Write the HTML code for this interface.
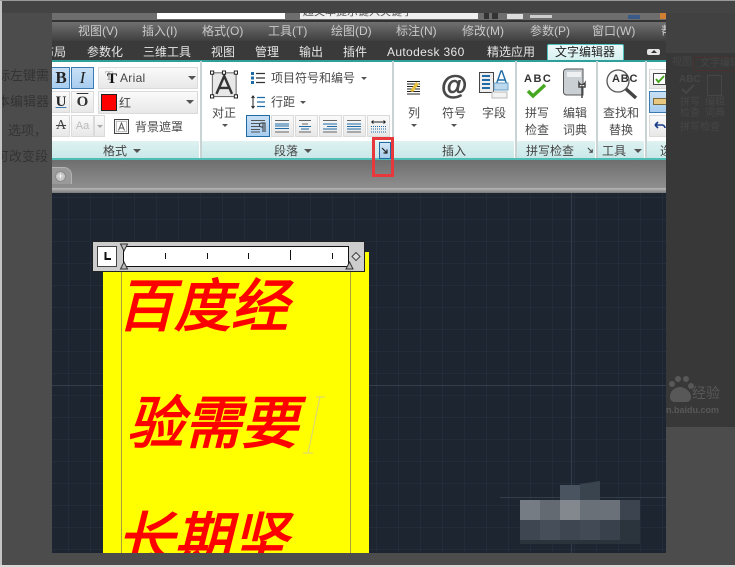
<!DOCTYPE html>
<html lang="zh"><head><meta charset="utf-8"><style>
html,body{margin:0;padding:0}
body{width:735px;height:567px;overflow:hidden;position:relative;background:#4c4c4c;font-family:"Liberation Sans","Noto Sans CJK SC",sans-serif}
div,span{position:absolute;white-space:nowrap;box-sizing:border-box}
svg{position:absolute;overflow:visible}
.m{top:23px;font-size:12px;line-height:16px;color:#c9c9c9}
.t{top:44px;height:16px;font-size:12px;line-height:16px;color:#e6e6e6}
.l{font-size:12px;line-height:16px;color:#4a4a4a}
.p{font-size:12px;line-height:16px;color:#444;top:143px}
.bd{top:141px;height:17px;background:linear-gradient(#dff2f2,#c9e8e8)}
.btn{background:linear-gradient(#fafafa,#e8e8e8);border:1px solid #dadada}
.on{background:linear-gradient(#c9e0f5,#a8cdf0);border:1px solid #3a7ab0}
.sep{top:61px;width:2px;height:97px;background:#c9d3d3}
.red{font-family:"Noto Sans CJK SC",sans-serif;color:#f00;font-weight:400;font-style:italic;font-size:57px;line-height:70px;-webkit-text-stroke:1.6px #f00}
.tr{width:0;height:0;border-left:3px solid transparent;border-right:3px solid transparent;border-top:3px solid #555}
.bg{color:#464646;font-size:10px;line-height:12px}
.lt{font-size:13px;line-height:16px;color:#333}
</style></head><body>
<!-- backdrop -->
<div class="lt" style="left:-3px;top:68px">标左键需</div>
<div class="lt" style="left:-3px;top:94px">本编辑器</div>
<div class="lt" style="left:8px;top:123px">选项，</div>
<div class="lt" style="left:-4px;top:149px">可改变段</div>
<div style="left:0;top:0;width:2px;height:567px;background:#c4c4c4"></div>
<div style="left:0;top:0;width:735px;height:1px;background:#9a9a9a"></div>
<div style="left:2px;top:1px;width:733px;height:12px;background:#444"></div>
<div style="left:0;top:565px;width:735px;height:2px;background:#d8d8d8"></div>
<div style="left:666px;top:13px;width:69px;height:40px;background:#414141"></div>
<div style="left:666px;top:53px;width:69px;height:374px;background:#383838"></div>
<!-- ghost ribbon on right -->
<div class="bg" style="left:672px;top:57px">视图</div>
<div style="left:693px;top:57px;width:42px;height:14px;border:1px solid #4a3030;border-right:0;border-radius:3px 0 0 3px"></div>
<div class="bg" style="left:700px;top:58px">文字编辑器</div>
<div class="bg" style="left:679px;top:74px;font-weight:700">ABC</div>
<svg style="left:681px;top:84px" width="14" height="10" viewBox="0 0 14 10"><path d="M1 5 5 9 13 1" fill="none" stroke="#464646" stroke-width="2"/></svg>
<div style="left:707px;top:75px;width:15px;height:21px;border:1px solid #464646"></div>
<div class="bg" style="left:680px;top:97px">拼写</div><div class="bg" style="left:705px;top:97px">编辑</div>
<div class="bg" style="left:680px;top:108px">检查</div><div class="bg" style="left:705px;top:108px">词典</div>
<div class="bg" style="left:680px;top:122px">拼写检查</div>
<!-- watermark -->
<svg style="left:666px;top:374px" width="60" height="40" viewBox="0 0 60 40"><g fill="#585858"><circle cx="6" cy="10" r="3"/><circle cx="12" cy="5" r="3"/><circle cx="20" cy="5" r="3"/><circle cx="25" cy="12" r="3"/><path d="M4 23c0-7 6-10 10-10s11 4 11 10c0 4-3 5-5 5H9c-3 0-5-2-5-5z"/></g></svg>
<div style="left:692px;top:385px;font-size:14px;line-height:16px;color:#585858">经验</div>
<div style="left:666px;top:404px;font-size:9px;line-height:12px;color:#585858;font-weight:700">n.baidu.com</div>

<!-- app -->
<div style="left:52px;top:13px;width:614px;height:7px;background:#6e6e6e"></div>
<div style="left:157px;top:13px;width:128px;height:6px;background:#fff"></div>
<div style="left:300px;top:13px;width:178px;height:6px;background:#f0f0f0;overflow:hidden"><span style="left:3px;top:-8px;font-size:11px;line-height:14px;color:#555">超文本提示键入关键字</span></div>
<div style="left:484px;top:13px;width:5px;height:6px;background:#333"></div>
<div style="left:492px;top:13px;width:6px;height:6px;background:#333"></div>
<div style="left:507px;top:14px;width:16px;height:5px;background:#ddd"></div>
<div style="left:530px;top:15px;width:22px;height:3px;background:#ccc"></div>
<div style="left:628px;top:15px;width:12px;height:4px;background:#3a5a8a"></div>
<div style="left:660px;top:13px;width:6px;height:6px;background:#d08030"></div>
<div style="left:52px;top:20px;width:614px;height:2px;background:#333"></div>
<div style="left:52px;top:22px;width:614px;height:19px;background:linear-gradient(#707070,#3f3f3f)"></div>
<div class="m" style="left:78px">视图(V)</div>
<div class="m" style="left:142px">插入(I)</div>
<div class="m" style="left:202px">格式(O)</div>
<div class="m" style="left:268px">工具(T)</div>
<div class="m" style="left:331px">绘图(D)</div>
<div class="m" style="left:396px">标注(N)</div>
<div class="m" style="left:462px">修改(M)</div>
<div class="m" style="left:530px">参数(P)</div>
<div class="m" style="left:592px">窗口(W)</div>
<div class="m" style="left:661px;width:5px;height:16px;overflow:hidden">帮</div>
<div style="left:52px;top:41px;width:614px;height:20px;background:#3a3a3a"></div>
<div class="t" style="left:52px;width:14px;overflow:hidden"><span style="left:-10px;top:0">布局</span></div>
<div class="t" style="left:87px">参数化</div>
<div class="t" style="left:143px">三维工具</div>
<div class="t" style="left:211px">视图</div>
<div class="t" style="left:255px">管理</div>
<div class="t" style="left:299px">输出</div>
<div class="t" style="left:343px">插件</div>
<div class="t" style="left:387px;letter-spacing:.35px">Autodesk 360</div>
<div class="t" style="left:487px">精选应用</div>
<div style="left:547px;top:44px;width:77px;height:18px;background:linear-gradient(#eefafa,#d3f0ef);border:1px solid #4fc0bb;border-bottom:0;border-radius:2px 2px 0 0"></div>
<div class="t" style="left:555px;color:#222">文字编辑器</div>
<div style="left:647px;top:49px;width:13px;height:6px;background:#e4e4e4;border-radius:2px"></div>
<div class="tr" style="left:651px;top:50px;border-top:0;border-bottom:3px solid #333"></div>

<!-- ribbon -->
<div style="left:52px;top:60px;width:614px;height:2px;background:#2f9f9a"></div>
<div style="left:52px;top:62px;width:614px;height:96px;background:#fff"></div>
<div class="bd" style="left:52px;width:147px"></div>
<div class="bd" style="left:202px;width:188px"></div>
<div class="bd" style="left:394px;width:120px"></div>
<div class="bd" style="left:517px;width:78px"></div>
<div class="bd" style="left:598px;width:46px"></div>
<div class="bd" style="left:647px;width:19px"></div>
<div class="sep" style="left:200px"></div>
<div class="sep" style="left:392px"></div>
<div class="sep" style="left:515px"></div>
<div class="sep" style="left:596px"></div>
<div class="sep" style="left:645px"></div>
<div style="left:52px;top:158px;width:614px;height:2px;background:#4fbcb6"></div>

<!-- format panel -->
<div class="on" style="left:52px;top:67px;width:18px;height:22px;border-left:0"></div>
<div style="left:52px;top:67px;width:18px;height:22px;font:700 17px/22px 'Liberation Serif',serif;color:#222;text-align:center">B</div>
<div class="on" style="left:71px;top:67px;width:23px;height:22px"></div>
<div style="left:71px;top:67px;width:23px;height:22px;font:italic 17px/22px 'Liberation Serif',serif;color:#222;text-align:center">I</div>
<div class="btn" style="left:52px;top:91px;width:18px;height:22px;border-left:0"></div>
<div style="left:52px;top:91px;width:18px;height:22px;font:700 15px/22px 'Liberation Serif',serif;color:#222;text-align:center;text-decoration:underline;text-decoration-color:#3a7ab0">U</div>
<div class="btn" style="left:71px;top:91px;width:23px;height:22px"></div>
<div style="left:71px;top:91px;width:23px;height:22px;font:700 15px/22px 'Liberation Serif',serif;color:#333;text-align:center;text-decoration:overline">O</div>
<div class="btn" style="left:52px;top:115px;width:18px;height:22px;border-left:0"></div>
<div style="left:52px;top:115px;width:18px;height:22px;font:14px/22px 'Liberation Serif',serif;color:#444;text-align:center;text-decoration:line-through">A</div>
<div class="btn" style="left:71px;top:115px;width:23px;height:22px"></div>
<div style="left:71px;top:115px;width:23px;height:22px;font:11px/22px 'Liberation Sans',sans-serif;color:#bbb;text-align:center">Aa</div>
<div class="btn" style="left:94px;top:115px;width:11px;height:22px"></div>
<div class="tr" style="left:97px;top:125px;border-top-color:#aaa"></div>
<div class="btn" style="left:98px;top:67px;width:100px;height:22px"></div>
<div style="left:105px;top:68px;font:13px/16px 'Liberation Serif',serif;color:#999">T</div>
<div style="left:107px;top:71px;font:700 15px/16px 'Liberation Serif',serif;color:#111">T</div>
<div style="left:120px;top:70px;font-size:12px;line-height:16px;color:#444;letter-spacing:.3px">Arial</div>
<div class="tr" style="left:188px;top:76px;border-left-width:4px;border-right-width:4px;border-top-width:4px"></div>
<div class="btn" style="left:98px;top:91px;width:100px;height:23px"></div>
<div style="left:101px;top:94px;width:16px;height:17px;background:#f00;border:1px solid #222"></div>
<div style="left:119px;top:95px;font-size:12px;line-height:16px;color:#444">红</div>
<div class="tr" style="left:186px;top:100px;border-left-width:4px;border-right-width:4px;border-top-width:4px"></div>
<svg style="left:114px;top:119px" width="16" height="16" viewBox="0 0 16 16"><rect x=".5" y=".5" width="14" height="14" fill="#f4f4f4" stroke="#444"/><rect x="2.5" y="2.5" width="10" height="10" fill="#fff" stroke="#888" stroke-dasharray="1 1"/><path d="M4.5 11.5 7.5 4l3 7.5M5.5 9h4" fill="none" stroke="#555"/></svg>
<div class="l" style="left:135px;top:119px">背景遮罩</div>
<div class="p" style="left:103px">格式</div>
<div class="tr" style="left:133px;top:149px;border-left-width:4px;border-right-width:4px;border-top-width:4px"></div>

<!-- paragraph panel -->
<svg style="left:210px;top:71px" width="28" height="27" viewBox="0 0 29.5 29.500"><rect x="2" y="2" width="26" height="26" fill="#e8e8e8" stroke="#555"/><path d="M6.5 25 15 5.5 23.500 25M9.500 18.500h11" fill="none" stroke="#333" stroke-width="2.600"/><g fill="#fff" stroke="#111"><rect x="0" y="0" width="3.500" height="3.500"/><rect x="13" y="0" width="3.500" height="3.500"/><rect x="26" y="0" width="3.500" height="3.500"/><rect x="0" y="26" width="3.500" height="3.500"/><rect x="26" y="26" width="3.500" height="3.500"/></g></svg>
<div class="l" style="left:212px;top:105px">对正</div>
<div class="tr" style="left:222px;top:124px"></div>
<svg style="left:251px;top:72px" width="14" height="12" viewBox="0 0 14 12"><g fill="#1e6ba8"><rect x="0" y="0" width="3" height="3"/><rect x="0" y="4.500" width="3" height="3"/><rect x="0" y="9" width="3" height="3"/></g><path d="M5 1.500h9M5 6h9M5 10.500h9" stroke="#333" stroke-width="1.200"/></svg>
<div class="l" style="left:271px;top:70px">项目符号和编号</div>
<div class="tr" style="left:361px;top:77px"></div>
<svg style="left:251px;top:95px" width="14" height="14" viewBox="0 0 14 14"><path d="M2 1v12M.5 3 2 1l1.500 2M.5 11 2 13l1.500-2" fill="none" stroke="#222"/><path d="M6 2.500h8M6 7h8M6 11.500h8" stroke="#1e6ba8" stroke-width="1.200"/></svg>
<div class="l" style="left:271px;top:94px">行距</div>
<div class="tr" style="left:300px;top:101px"></div>
<div class="on" style="left:246px;top:115px;width:24px;height:22px;border-color:#1f6aa5"></div>
<svg style="left:250px;top:119px" width="16" height="14" viewBox="0 0 16 14"><path d="M1 1.500h14M1 4.500h9M1 7.500h9M1 10.500h9M1 13h9" stroke="#555"/><path d="M11 4h4v9M13 4v9M11.500 4a2 2 0 0 0 0 4h1.500" fill="none" stroke="#333"/></svg>
<div class="btn" style="left:271px;top:115px;width:23px;height:22px"></div>
<div class="btn" style="left:295px;top:115px;width:23px;height:22px"></div>
<div class="btn" style="left:319px;top:115px;width:23px;height:22px"></div>
<div class="btn" style="left:343px;top:115px;width:23px;height:22px"></div>
<div class="btn" style="left:367px;top:115px;width:23px;height:22px"></div>
<svg style="left:274px;top:119px" width="112" height="14" viewBox="0 0 112 14" fill="none"><g stroke="#666"><path d="M1 1.500h14M1 13h14"/></g><g stroke="#1e6ba8"><path d="M1 5h14M1 7h14M1 9.500h14"/></g><g stroke="#666"><path d="M25 1.500h12M25 13h12M28 5h6"/></g><g stroke="#1e6ba8"><path d="M25 7.500h12M27 10h8"/></g><g stroke="#666"><path d="M49 1.500h14M49 13h14"/></g><g stroke="#1e6ba8"><path d="M49 5h14M53 7.500h10M49 10h14"/></g><g stroke="#666"><path d="M73 1.500h14M73 13h14"/></g><g stroke="#1e6ba8"><path d="M73 5h14M73 7.500h14M73 10h14"/></g><path d="M97.500 3h14M97.500 3l2-1.500M97.500 3l2 1.500M111.500 3l-2-1.500M111.500 3l-2 1.500" stroke="#222"/><g stroke="#1e6ba8" stroke-dasharray="1 1"><path d="M97 7.500h15M97 10h15M97 13h15"/></g></svg>
<div class="p" style="left:274px">段落</div>
<div class="tr" style="left:304px;top:149px;border-left-width:4px;border-right-width:4px;border-top-width:4px"></div>
<div style="left:379px;top:142px;width:12px;height:17px;background:linear-gradient(#d2e6f6,#a9cdea);border:1px solid #1f6aa5"></div>
<svg style="left:381px;top:147px" width="8" height="8" viewBox="0 0 8 8"><path d="M1 1 6 6M6 2.500V6H2.500" fill="none" stroke="#222" stroke-width="1.200"/></svg>

<!-- insert panel -->
<svg style="left:406px;top:80px" width="15" height="15" viewBox="0 0 15 15"><path d="M1 1.500h13M1 4h13M1 6.500h13M1 9h13M1 11.500h13M1 14h13" stroke="#222"/><path d="M4 11 10 2l3 2-6 8z" fill="#e8c040"/></svg>
<div style="left:441px;top:69px;font:700 27px/32px 'Liberation Sans',sans-serif;color:#484848;-webkit-text-stroke:.6px #484848">@</div>
<svg style="left:479px;top:70px" width="30" height="30" viewBox="0 0 30 30"><rect x=".500" y="2.500" width="14" height="20" fill="#eee" stroke="#444"/><path d="M3 6h8M3 10h8M3 14h8M3 18h8" stroke="#1e6ba8" stroke-width="2"/><path d="M17 15 22 1h1l5 14M19 10h7" fill="none" stroke="#1e6ba8" stroke-width="1.400"/><rect x="15" y="13" width="14" height="7" fill="#bcd9ee" stroke="#6aa0c8"/><rect x="13" y="22" width="15" height="6" fill="#f2f2f2" stroke="#bbb"/></svg>
<div class="l" style="left:408px;top:105px">列</div>
<div class="tr" style="left:411px;top:124px"></div>
<div class="l" style="left:442px;top:105px">符号</div>
<div class="tr" style="left:451px;top:124px"></div>
<div class="l" style="left:482px;top:105px">字段</div>
<div class="p" style="left:442px">插入</div>

<!-- spell -->
<div style="left:524px;top:72px;font:700 11px/14px 'Liberation Sans',sans-serif;color:#333;letter-spacing:1.500px">ABC</div>
<svg style="left:527px;top:83px" width="22" height="15" viewBox="0 0 22 15"><path d="M1 8 6 13 18 2" fill="none" stroke="#46a820" stroke-width="3.500"/></svg>
<svg style="left:562px;top:68px" width="27" height="32" viewBox="0 0 27 32"><path d="M1.500 4a3 3 0 0 1 3-3H21v26H4.500a3 3 0 0 1-3-3z" fill="#c9cfd3" stroke="#555"/><rect x="5" y="4" width="14" height="5" fill="#eef0f2"/><path d="M20 18v12M17 15a3.500 3.500 0 0 0 6 0v4h-6z" fill="#fff" stroke="#444" stroke-width="1.500"/></svg>
<div class="l" style="left:525px;top:105px">拼写</div>
<div class="l" style="left:525px;top:122px">检查</div>
<div class="l" style="left:563px;top:105px">编辑</div>
<div class="l" style="left:563px;top:122px">词典</div>
<div class="p" style="left:526px">拼写检查</div>
<svg style="left:587px;top:147px" width="7" height="7" viewBox="0 0 8 8"><path d="M1 1 6 6M6 2.500V6H2.500" fill="none" stroke="#444" stroke-width="1.200"/></svg>

<!-- find -->
<svg style="left:605px;top:69px" width="34" height="32" viewBox="0 0 34 32"><circle cx="13" cy="12" r="11" fill="#fafafa" stroke="#555" stroke-width="1.300"/><path d="M21 20 31 29" stroke="#444" stroke-width="3.500"/></svg>
<div style="left:612px;top:72px;font:700 11px/14px 'Liberation Sans',sans-serif;color:#333;letter-spacing:.8px">ABC</div>
<div class="l" style="left:603px;top:105px">查找和</div>
<div class="l" style="left:609px;top:122px">替换</div>
<div class="p" style="left:602px">工具</div>
<div class="tr" style="left:634px;top:149px;border-left-width:4px;border-right-width:4px;border-top-width:4px"></div>

<!-- options -->
<div class="btn" style="left:649px;top:69px;width:17px;height:20px;border-right:0"></div>
<svg style="left:653px;top:73px" width="13" height="12" viewBox="0 0 13 12"><rect x=".500" y=".500" width="12" height="11" fill="#fff" stroke="#444"/><path d="M3 6l2.500 3L11 3" fill="none" stroke="#46a820" stroke-width="2"/></svg>
<div class="on" style="left:649px;top:91px;width:17px;height:22px;border-right:0"></div>
<div style="left:653px;top:98px;width:13px;height:7px;background:#e8c880;border:1px solid #7a6a40;border-right:0"></div>
<div class="btn" style="left:649px;top:115px;width:17px;height:22px;border-right:0"></div>
<svg style="left:654px;top:121px" width="12" height="9" viewBox="0 0 12 9"><path d="M1 4h7a3 3 0 0 1 3 3M1 4l3-3M1 4l3 3" fill="none" stroke="#1b3d8a" stroke-width="1.600"/></svg>
<div class="p" style="left:660px;width:6px;height:16px;overflow:hidden">选</div>

<!-- tabs band -->
<div style="left:52px;top:160px;width:614px;height:28px;background:linear-gradient(#6e6e6e,#8f8f8f)"></div>
<div style="left:52px;top:188px;width:614px;height:5px;background:linear-gradient(#b9b9b9,#7a7a7a)"></div>
<div style="left:52px;top:167px;width:20px;height:17px;background:#9a9a9a;border:1px solid #b2b2b2;border-left:0;border-bottom:0;border-radius:0 8px 0 0"></div>
<div style="left:55px;top:171px;width:11px;height:11px;border-radius:50%;background:#c6c6c6;border:1px solid #8a8a8a;font:700 9px/9px 'Liberation Sans',sans-serif;text-align:center;color:#eee">+</div>
<!-- red callout -->
<div style="left:372px;top:137px;width:22px;height:40px;border:3px solid #e8383c"></div>

<!-- canvas -->
<div style="left:52px;top:193px;width:614px;height:360px;background-color:#1c2530;background-image:linear-gradient(#343d4a,#343d4a),linear-gradient(#343d4a,#343d4a),linear-gradient(#232c38 1px,transparent 1px),linear-gradient(90deg,#232c38 1px,transparent 1px);background-size:100% 1px,1px 100%,22px 22px,22px 22px;background-position:0 192px,519px 0,0 4px,16px 0;background-repeat:repeat-x,repeat-y,repeat,repeat"></div>
<div style="left:500px;top:497px;width:166px;height:1px;background:#343d4a"></div>

<!-- yellow text box -->
<div style="left:103px;top:252px;width:266px;height:301px;background:#ff0;overflow:hidden">
  <div style="left:18px;top:0;width:1px;height:301px;background:#a8a040"></div>
  <div style="left:247px;top:0;width:1px;height:301px;background:#a8a040"></div>
  <div class="red" style="left:14px;top:15px">百度经</div>
  <div class="red" style="left:24px;top:132px">验需要</div>
  <div class="red" style="left:14px;top:248px">长期坚</div>
  <svg style="left:200px;top:140px" width="30" height="66" viewBox="0 0 30 66"><path d="M13 5h9M17 5 5 61M0 61h10" fill="none" stroke="#d8d480" stroke-width="1"/></svg>
</div>

<!-- ruler -->
<div style="left:92px;top:241px;width:273px;height:31px;background:#cdcdcd;border:1px solid #222"></div>
<div style="left:97px;top:246px;width:20px;height:21px;background:#fff;border:1px solid #444"></div>
<svg style="left:104px;top:252px" width="8" height="9" viewBox="0 0 8 9"><path d="M1.500 0v7H7" fill="none" stroke="#111" stroke-width="2"/></svg>
<div style="left:123px;top:246px;width:226px;height:21px;background:#fff;border:1px solid #111"></div>
<svg style="left:120px;top:243px" width="250" height="28" viewBox="0 0 250 28" fill="none"><path d="M.500 1h7L4 8zM.500 26h7L4 19z" fill="#bbb" stroke="#333"/><path d="M226 26h7l-3.500-7z" fill="#bbb" stroke="#333"/><path d="M45.500 10v6M87.500 10v6M128.500 10v6M170.500 7v10M212.500 10v6" stroke="#111"/><path d="M232 13.500l4-4 4 4-4 4z" fill="#ddd" stroke="#444"/></svg>

<!-- mosaic -->
<div style="left:560px;top:485px;width:20px;height:20px;background:#495460"></div>
<div style="left:580px;top:481px;width:20px;height:24px;background:#3a444f;clip-path:polygon(0 3px,100% 0,100% 100%,0 100%)"></div>
<div style="left:520px;top:500px;width:20px;height:20px;background:#767c84"></div>
<div style="left:540px;top:500px;width:20px;height:20px;background:#636a72"></div>
<div style="left:560px;top:500px;width:20px;height:20px;background:#83888e"></div>
<div style="left:580px;top:500px;width:20px;height:20px;background:#6a7078"></div>
<div style="left:600px;top:500px;width:20px;height:20px;background:#6b7178"></div>
<div style="left:620px;top:500px;width:20px;height:20px;background:#3c454f"></div>
<div style="left:520px;top:520px;width:20px;height:20px;background:#3e4751"></div>
<div style="left:540px;top:520px;width:20px;height:20px;background:#464f59"></div>
<div style="left:560px;top:520px;width:20px;height:20px;background:#3d4651"></div>
<div style="left:580px;top:520px;width:20px;height:20px;background:#424b55"></div>
<div style="left:600px;top:520px;width:20px;height:20px;background:#38414c"></div>
<div style="left:620px;top:520px;width:20px;height:20px;background:#2b333d"></div>
<div style="left:520px;top:540px;width:120px;height:4px;background:#2a323c"></div>
</body></html>
